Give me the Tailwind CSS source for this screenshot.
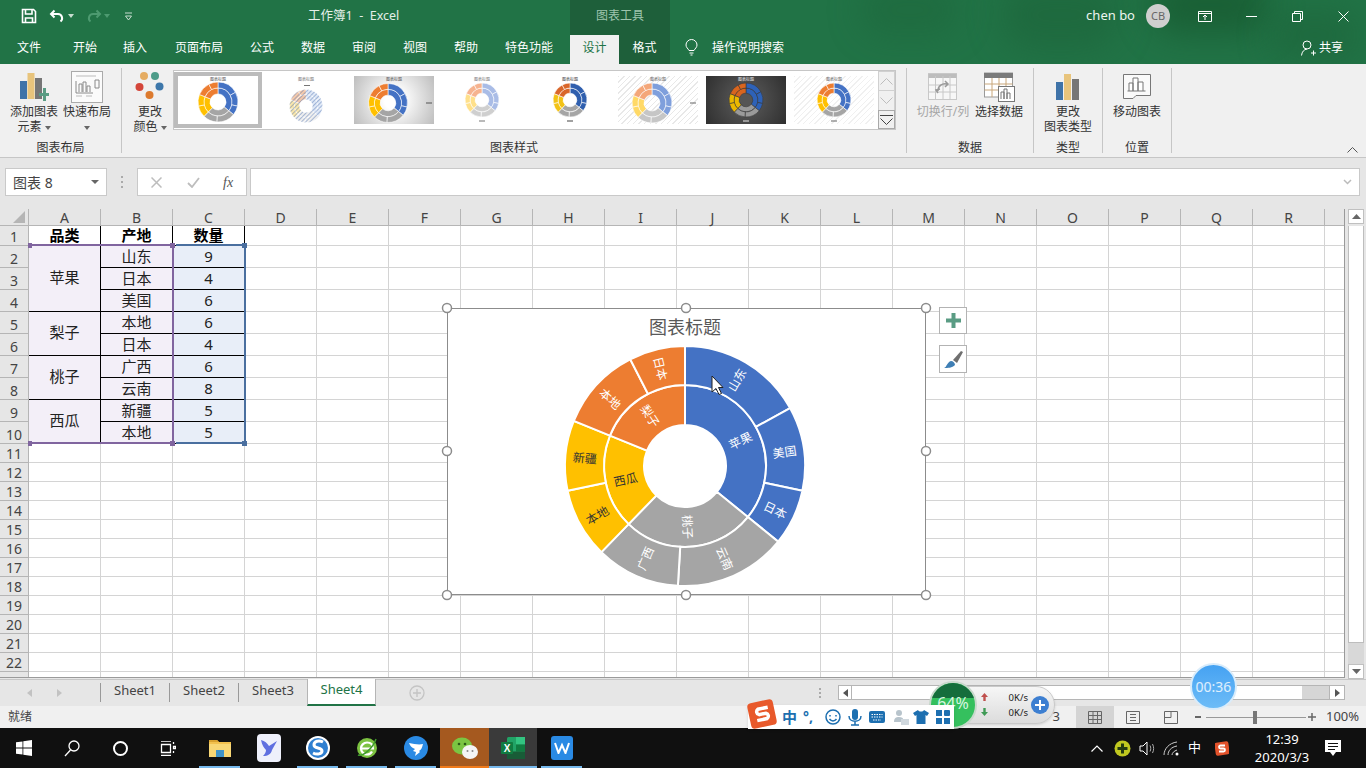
<!DOCTYPE html>
<html lang="zh-CN">
<head>
  <meta charset="UTF-8">
  <title>工作簿1 - Excel</title>
  <meta name="viewport" content="width=device-width, initial-scale=1.0">
  <script src="https://cdn.jsdelivr.net/npm/@tailwindcss/browser@4"></script>
</head>
<body class="relative w-[1366px] h-[768px] overflow-hidden bg-[#e6e6e6] text-[12px] text-[#333333] font-['Noto_Sans','Noto_Sans_CJK_SC',sans-serif]">

  <!-- title bar + tabs -->
  <div class="relative h-[64px] bg-[#217346] overflow-hidden">
    <!-- watercolor pattern -->
    <div class="absolute left-[860px] top-[-15px] w-[100px] h-[50px] rounded-full bg-[#1b6238]/40 blur-lg"></div>
    <div class="absolute left-[1000px] top-[-20px] w-[120px] h-[70px] rounded-full bg-[#1b6238]/50 blur-lg"></div>
    <div class="absolute left-[1150px] top-[-25px] w-[120px] h-[60px] rounded-full bg-[#17592f]/70 blur-lg"></div>
    <div class="absolute left-[1270px] top-[10px] w-[90px] h-[50px] rounded-full bg-[#1b6238]/50 blur-lg"></div>
    <div class="absolute left-[570px] top-0 w-[100px] h-[64px] bg-[#1e5f3a]"></div>

    <div class="relative flex h-[35px] pb-[3px] items-center text-white">
      <div class="flex items-center w-[308px] pl-[21px]">
        <svg width="16" height="16" viewBox="0 0 16 16" fill="none" stroke="#fff" stroke-width="1.6"><path d="M1.5 1.5h11l2 2v11h-13z"/><path d="M4.5 2v4H11V2M4.5 14.5V10h7v4.5"/></svg>
        <svg class="ml-[12px]" width="16" height="14" viewBox="0 0 16 14" fill="none" stroke="#fff" stroke-width="2"><path d="M5.5 1.5 2 5l3.5 3.5"/><path d="M2 5h7a4.2 4.2 0 0 1 2.5 7.5"/></svg>
        <svg class="ml-[3px]" width="6" height="4" viewBox="0 0 6 4" fill="#c8ddd0"><path d="M0 0h6L3 4z"/></svg>
        <svg class="ml-[12px]" width="16" height="14" viewBox="0 0 16 14" fill="none" stroke="#4d9a70" stroke-width="2"><path d="M10.5 1.5 14 5l-3.5 3.5"/><path d="M14 5H7a4.2 4.2 0 0 0-2.5 7.5"/></svg>
        <svg class="ml-[2px]" width="6" height="4" viewBox="0 0 6 4" fill="#4d9a70"><path d="M0 0h6L3 4z"/></svg>
        <svg class="ml-[14px]" width="9" height="9" viewBox="0 0 9 9" fill="none" stroke="#c8ddd0"><path d="M1 1h7M1.5 4h6L4.500 8z"/></svg>
      </div>
      <span class="text-[12.5px] text-[#e4efe8] whitespace-pre">工作簿1  -  Excel</span>
      <span class="absolute left-[570px] w-[100px] text-center text-[#9fc5ae]">图表工具</span>
      <div class="ml-auto flex items-center">
        <span class="text-[13px] text-[#eef5f0]">chen bo</span>
        <span class="ml-[11px] w-[24px] h-[24px] rounded-full bg-[#cfcfcf] text-[#666666] text-[11px] flex items-center justify-center">CB</span>
        <div class="ml-[12px] w-[46px] flex justify-center"><svg width="14" height="11" viewBox="0 0 14 11" fill="none" stroke="#fff"><path d="M.5.5h13v10H.5zM.5 2.5h13M7 9V4.500M5 6l2-2 2 2"/></svg></div>
        <div class="w-[46px] flex justify-center"><svg width="11" height="1" viewBox="0 0 11 1"><path d="M0 .5h11" stroke="#fff"/></svg></div>
        <div class="w-[46px] flex justify-center"><svg width="11" height="11" viewBox="0 0 11 11" fill="none" stroke="#fff"><path d="M.5 2.5h8v8h-8zM2.500 2.500V.5h8v8h-2"/></svg></div>
        <div class="w-[46px] flex justify-center"><svg width="11" height="11" viewBox="0 0 11 11" fill="none" stroke="#fff"><path d="M.5.5l10 10M10.500.5l-10 10"/></svg></div>
      </div>
    </div>

    <div class="relative flex h-[29px] text-white">
      <div class="w-[59px] pl-[17px] leading-[26px]">文件</div>
      <div class="w-[50px] pl-[14px] leading-[26px]">开始</div>
      <div class="w-[52px] pl-[14px] leading-[26px]">插入</div>
      <div class="w-[76px] pl-[14px] leading-[26px]">页面布局</div>
      <div class="w-[51px] pl-[13px] leading-[26px]">公式</div>
      <div class="w-[51px] pl-[13px] leading-[26px]">数据</div>
      <div class="w-[51px] pl-[13px] leading-[26px]">审阅</div>
      <div class="w-[51px] pl-[13px] leading-[26px]">视图</div>
      <div class="w-[51px] pl-[13px] leading-[26px]">帮助</div>
      <div class="w-[78px] pl-[13px] leading-[26px] whitespace-nowrap">特色功能</div>
      <div class="w-[49px] bg-[#f0f0f0] text-[#217346] text-center leading-[26px]">设计</div>
      <div class="w-[51px] text-center leading-[26px]">格式</div>
      <div class="ml-[15px] mt-[4px]"><svg width="13" height="17" viewBox="0 0 13 17" fill="none" stroke="#fff"><path d="M4 11.500C3 9.500 1 8.500 1 6a5.500 5.500 0 0 1 11 0c0 2.500-2 3.500-3 5.500zM4.500 14h4M5.500 16h2"/></svg></div>
      <div class="ml-[14px] leading-[26px]">操作说明搜索</div>
      <div class="ml-auto mr-[23px] flex items-center h-[26px]">
        <svg width="15" height="16" viewBox="0 0 15 16" fill="none" stroke="#fff"><circle cx="6" cy="5" r="4"/><path d="M.5 15.500c.5-4 2.500-6 5.500-6.500M10 13h5M12.500 10.500v5"/></svg>
        <span class="ml-[3px]">共享</span>
      </div>
    </div>
  </div>

  <!-- ribbon -->
  <div class="flex h-[94px] bg-[#f0f0f0] border-b border-[#c6c6c6] text-[#333333]">
    <div class="w-[121px] flex flex-col pt-[6px]">
      <div class="flex pl-[8px] gap-[3px] flex-1">
        <div class="w-[52px] flex flex-col items-center">
          <div class="h-[34px] flex items-center">
            <svg width="30" height="30" viewBox="0 0 30 30"><rect x="1" y="9" width="7" height="18" fill="#3f73a8"/><rect x="8.5" y="1" width="7" height="26" fill="#e8c47c"/><rect x="16" y="6" width="7" height="21" fill="#767676"/><path d="M20 21h4v-5h3v5h4v3h-4v5h-3v-5h-4z" fill="#5a9c84"/></svg>
          </div>
          <div class="leading-[15px] text-center whitespace-nowrap">添加图表<br>元素 <svg class="inline" width="6" height="4" viewBox="0 0 6 4" fill="#666"><path d="M0 0h6L3 4z"/></svg></div>
        </div>
        <div class="w-[48px] flex flex-col items-center">
          <div class="h-[34px] flex items-center">
            <svg width="33" height="33" viewBox="0 0 33 33" fill="none" stroke="#8a8a8a"><rect x=".5" y=".5" width="31" height="31" fill="#fbfbfb" stroke="#aaa"/><path d="M5 5h20M5 25h6M15 25h6" stroke="#bbb"/><path d="M5 10v12h17M8 21v-8h3v8M12 21V11h3v10M16 21v-6h3v6M24 9h4v8h-4z"/></svg>
          </div>
          <div class="leading-[15px] text-center whitespace-nowrap">快速布局<br><svg class="inline" width="6" height="4" viewBox="0 0 6 4" fill="#666"><path d="M0 0h6L3 4z"/></svg></div>
        </div>
      </div>
      <div class="text-center leading-[15px] mb-[2px]">图表布局</div>
    </div>
    <div class="w-px my-[4px] bg-[#c6c6c6]"></div>

    <div class="w-[784px] flex flex-col pt-[6px]">
      <div class="flex flex-1">
        <div class="ml-[5px] w-[46px] flex flex-col items-center">
          <div class="h-[34px] flex items-center">
            <svg width="30" height="30" viewBox="0 0 30 30"><circle cx="9" cy="4" r="4" fill="#e5ac62"/><circle cx="20" cy="4" r="4" fill="#4e9c89"/><circle cx="4.5" cy="15" r="4" fill="#d4463a"/><circle cx="24.5" cy="14.5" r="4" fill="#3d77aa"/><circle cx="14.5" cy="23" r="4" fill="#dc7a2e"/></svg>
          </div>
          <div class="leading-[15px] text-center whitespace-nowrap">更改<br>颜色 <svg class="inline" width="6" height="4" viewBox="0 0 6 4" fill="#666"><path d="M0 0h6L3 4z"/></svg></div>
        </div>
        <div class="h-[60px] w-[723px] flex bg-white border border-[#c6c6c6]">
          <div id="gallery" class="flex w-[704px]"></div>
          <div class="w-[17px] flex flex-col bg-[#f0f0f0]">
            <div class="h-[20px] flex items-center justify-center border border-[#d0d0d0]"><svg width="13" height="7" viewBox="0 0 13 7" fill="none" stroke="#bdbdbd"><path d="M.5 6.500 6.500.5l6 6"/></svg></div>
            <div class="h-[19px] flex items-center justify-center border-x border-[#d0d0d0]"><svg width="13" height="7" viewBox="0 0 13 7" fill="none" stroke="#bdbdbd"><path d="M.5.5l6 6 6-6"/></svg></div>
            <div class="h-[19px] flex flex-col items-center justify-center gap-[2px] border border-[#a9a9a9]"><div class="w-[13px] h-px bg-[#444444]"></div><svg width="13" height="7" viewBox="0 0 13 7" fill="none" stroke="#444"><path d="M.5.5l6 6 6-6"/></svg></div>
          </div>
        </div>
      </div>
      <div class="text-center leading-[15px] mb-[2px]">图表样式</div>
    </div>
    <div class="w-px my-[4px] bg-[#c6c6c6]"></div>

    <div class="w-[126px] flex flex-col pt-[6px]">
      <div class="flex pl-[9px] flex-1">
        <div class="w-[54px] flex flex-col items-center text-[#a6a6a6]">
          <div class="h-[34px] flex items-center">
            <svg width="30" height="28" viewBox="0 0 30 28" fill="none" stroke="#c8c8c8"><rect x=".5" y=".5" width="28" height="26" fill="#f7f7f7"/><path d="M.5 3h28" stroke="#bdbdbd" stroke-width="4"/><path d="M.5 12h28M.5 19h28M7.500 3v24M15 3v24M22 3v24"/><path d="M10 18a7 7 0 0 1 9-7M17 8l3 3-3 3M10 20l-2-3 4-1" stroke="#9a9a9a" stroke-width="1.5"/></svg>
          </div>
          <div class="leading-[15px] whitespace-nowrap">切换行/列</div>
        </div>
        <div class="w-[58px] flex flex-col items-center">
          <div class="h-[34px] flex items-center">
            <svg width="31" height="30" viewBox="0 0 31 30" fill="none" stroke="#c9a77a"><rect x=".5" y="1" width="28" height="24" fill="#fff" stroke="#999"/><rect x="0" y="1" width="29" height="5" fill="#7b7b7b" stroke="none"/><path d="M.5 12h28M.5 18h28M8 6v19M15 6v19M22 6v19"/><rect x="14.5" y="14.5" width="16" height="15" fill="#fff" stroke="#777"/><path d="M17 27v-7h3v7M20 27V17h3v10M23 27v-6h3v6" stroke="#777"/></svg>
          </div>
          <div class="leading-[15px] whitespace-nowrap">选择数据</div>
        </div>
      </div>
      <div class="text-center leading-[15px] mb-[2px]">数据</div>
    </div>
    <div class="w-px my-[4px] bg-[#c6c6c6]"></div>

    <div class="w-[68px] flex flex-col pt-[6px]">
      <div class="flex flex-col items-center flex-1">
        <div class="h-[34px] flex items-center">
          <svg width="24" height="28" viewBox="0 0 24 28"><rect x="0" y="9" width="7" height="18" fill="#3f73a8"/><rect x="8" y="1" width="7" height="26" fill="#e8c47c"/><rect x="16" y="6" width="7" height="21" fill="#767676"/></svg>
        </div>
        <div class="leading-[15px] text-center whitespace-nowrap">更改<br>图表类型</div>
      </div>
      <div class="text-center leading-[15px] mb-[2px]">类型</div>
    </div>
    <div class="w-px my-[4px] bg-[#c6c6c6]"></div>

    <div class="w-[68px] flex flex-col pt-[6px]">
      <div class="flex flex-col items-center flex-1">
        <div class="h-[34px] flex items-center">
          <svg width="29" height="26" viewBox="0 0 29 26" fill="#fff" stroke="#777"><path d="M.5.5h27v21H13l-3 3H.5z" fill="#fafafa"/><path d="M6 17V9h4v8M10 17V4h5v13M15 17V8h5v9M4.500 17h18" fill="#fff"/></svg>
        </div>
        <div class="leading-[15px] whitespace-nowrap">移动图表</div>
      </div>
      <div class="text-center leading-[15px] mb-[2px]">位置</div>
    </div>
    <div class="w-px my-[4px] bg-[#c6c6c6]"></div>

    <div class="flex-1 flex justify-end items-end pr-[8px] pb-[4px]">
      <svg width="11" height="6" viewBox="0 0 11 6" fill="none" stroke="#555"><path d="M.5 5.500l5-5 5 5"/></svg>
    </div>
  </div>

  <!-- name box + formula bar -->
  <div class="flex h-[51px] pt-[10px] pl-[5px] bg-[#e6e6e6]">
    <div class="w-[102px] h-[28px] flex items-center justify-between px-[7px] bg-white border border-[#c9c9c9] text-[14px] text-[#444444]">
      <span>图表 8</span><svg width="8" height="4" viewBox="0 0 8 4" fill="#666"><path d="M0 0h8L4 4z"/></svg>
    </div>
    <div class="w-[30px] flex flex-col items-center justify-center gap-[3px] h-[28px]">
      <div class="w-[2px] h-[2px] bg-[#aaaaaa]"></div><div class="w-[2px] h-[2px] bg-[#aaaaaa]"></div><div class="w-[2px] h-[2px] bg-[#aaaaaa]"></div>
    </div>
    <div class="w-[110px] h-[28px] flex items-center bg-white border border-[#c9c9c9]">
      <svg class="ml-[13px]" width="11" height="11" viewBox="0 0 11 11" fill="none" stroke="#bdbdbd" stroke-width="1.5"><path d="M.5.5l10 10M10.500.5l-10 10"/></svg>
      <svg class="ml-[25px]" width="13" height="11" viewBox="0 0 13 11" fill="none" stroke="#bdbdbd" stroke-width="1.8"><path d="M1 6l4 4 7-9"/></svg>
      <span class="ml-[23px] text-[14px] italic text-[#555555] font-['Liberation_Serif',serif]">fx</span>
    </div>
    <div class="ml-[3px] w-[1110px] h-[28px] flex items-center justify-end pr-[7px] bg-white border border-[#c9c9c9]">
      <svg width="9" height="6" viewBox="0 0 9 6" fill="none" stroke="#bbb" stroke-width="1.5"><path d="M1 1l3.500 3.500L8 1"/></svg>
    </div>
  </div>

  <!-- sheet -->
  <div class="relative flex h-[470px] bg-[#e6e6e6]">
    <div class="w-[1345px] h-[469px] overflow-hidden border-r border-b border-[#9a9a9a]">
      <div id="sheet" class="grid grid-cols-[29px_repeat(18,72px)_20px] grid-rows-[17px_20px_repeat(9,22px)_repeat(13,19px)] bg-white"></div>
    </div>
    <div class="ml-[3px] w-[16px] flex flex-col">
      <div class="h-[15px] flex items-center justify-center bg-white border border-[#c0c0c0]"><svg width="9" height="5" viewBox="0 0 9 5" fill="#666"><path d="M0 5h9L4.500 0z"/></svg></div>
      <div class="h-[417px] mt-[2px] bg-white border-x border-b border-[#bdbdbd]"></div>
      <div class="h-[21px] bg-[#d8d8d8]"></div>
      <div class="h-[15px] flex items-center justify-center bg-white border border-[#c0c0c0]"><svg width="9" height="5" viewBox="0 0 9 5" fill="#666"><path d="M0 0h9L4.500 5z"/></svg></div>
    </div>

    <!-- selection ranges over the grid -->
    <div class="absolute left-[30px] top-[35px] w-[144px] h-[200px] border-y-[2px] border-r-[2px] border-[#80659f]"></div>
    <div class="absolute left-[176px] top-[35px] w-[70px] h-[200px] border-y-[2px] border-r-[2px] border-[#4a6f9f]"></div>
    <div class="absolute left-[28px] top-[34px] w-[4px] h-[5px] bg-[#80659f]"></div>
    <div class="absolute left-[170px] top-[34px] w-[5px] h-[5px] bg-[#80659f]"></div>
    <div class="absolute left-[242px] top-[34px] w-[5px] h-[5px] bg-[#4a6f9f]"></div>
    <div class="absolute left-[28px] top-[232px] w-[4px] h-[5px] bg-[#80659f]"></div>
    <div class="absolute left-[170px] top-[232px] w-[5px] h-[5px] bg-[#80659f]"></div>
    <div class="absolute left-[242px] top-[232px] w-[5px] h-[5px] bg-[#4a6f9f]"></div>

    <!-- chart object -->
    <div class="absolute left-[447px] top-[99px] w-[479px] h-[287px] bg-white border border-[#8c8c8c]">
      <svg id="chart" width="477" height="285" viewBox="448 309 477 285" class="block"></svg>
    </div>
    <svg class="absolute left-[441px] top-[93px]" width="491" height="299" viewBox="0 0 491 299" fill="#fff" stroke="#8c8c8c" stroke-width="1.5">
      <circle cx="6" cy="6" r="4.5"/><circle cx="245" cy="6" r="4.5"/><circle cx="485" cy="6" r="4.5"/>
      <circle cx="6" cy="149" r="4.5"/><circle cx="485" cy="149" r="4.5"/>
      <circle cx="6" cy="293" r="4.5"/><circle cx="245" cy="293" r="4.5"/><circle cx="485" cy="293" r="4.5"/>
    </svg>
    <div class="absolute left-[939px] top-[98px] w-[28px] h-[27px] flex items-center justify-center bg-white border border-[#b3b3b3]">
      <svg width="15" height="15" viewBox="0 0 15 15" fill="#5a9c84"><path d="M5.500 0h4v5.500H15v4H9.500V15h-4V9.500H0v-4h5.500z"/></svg>
    </div>
    <div class="absolute left-[939px] top-[136px] w-[28px] h-[28px] flex items-center justify-center bg-white border border-[#b3b3b3]">
      <svg width="20" height="19" viewBox="0 0 20 19"><path d="M10 10 18 1l2 1-6 11z" fill="#6f6f6f"/><path d="M1 18c3-1 3-6 7-7 2 0 4 2 4 4-3 3-7 3-11 3z" fill="#3f7fb5"/></svg>
    </div>
    <!-- mouse pointer -->
    <svg class="absolute left-[711px] top-[166px]" width="13" height="21" viewBox="0 0 13 21"><path d="M1 1v16l4-3.500 3 6 2.500-1-3-6H12z" fill="#fff" stroke="#222"/></svg>
  </div>

  <!-- sheet tabs -->
  <div class="flex h-[27px] bg-[#e6e6e6] border-t border-[#c6c6c6] text-[#444444]">
    <div class="w-[100px] flex items-center pl-[27px] gap-[25px]">
      <svg width="5" height="8" viewBox="0 0 5 8" fill="#c2c2c2"><path d="M5 0v8L0 4z"/></svg>
      <svg width="5" height="8" viewBox="0 0 5 8" fill="#c2c2c2"><path d="M0 0v8l5-4z"/></svg>
    </div>
    <div class="w-[69px] mt-[3px] mb-[4px] border-l border-[#999999] text-center text-[13px] leading-[15px]">Sheet1</div>
    <div class="w-[69px] mt-[3px] mb-[4px] border-l border-[#999999] text-center text-[13px] leading-[15px]">Sheet2</div>
    <div class="w-[69px] mt-[3px] mb-[4px] border-l border-[#999999] text-center text-[13px] leading-[15px]">Sheet3</div>
    <div class="w-[69px] h-[27px] -mt-px bg-white border-x border-[#b5b5b5] border-b-2 border-b-[#217346] text-center text-[13px] leading-[20px] text-[#217346]">Sheet4</div>
    <div class="ml-[33px] flex items-center"><svg width="16" height="16" viewBox="0 0 16 16" fill="none" stroke="#c4c4c4" stroke-width="1.3"><circle cx="8" cy="8" r="7"/><path d="M8 4v8M4 8h8"/></svg></div>
    <div class="ml-[394px] flex flex-col justify-center gap-[2px]"><div class="w-[2px] h-[2px] bg-[#aaaaaa]"></div><div class="w-[2px] h-[2px] bg-[#aaaaaa]"></div><div class="w-[2px] h-[2px] bg-[#aaaaaa]"></div></div>
    <div class="ml-[17px] mt-[5px] h-[15px] w-[507px] flex bg-[#d6d6d6] border border-[#b5b5b5]">
      <div class="w-[13px] bg-white flex items-center justify-center border-r border-[#b5b5b5]"><svg width="5" height="8" viewBox="0 0 5 8" fill="#555"><path d="M5 0v8L0 4z"/></svg></div>
      <div class="w-[450px] bg-white"></div>
      <div class="flex-1"></div>
      <div class="w-[15px] bg-white flex items-center justify-center border-l border-[#b5b5b5]"><svg width="5" height="8" viewBox="0 0 5 8" fill="#555"><path d="M0 0v8l5-4z"/></svg></div>
    </div>
  </div>

  <!-- status bar -->
  <div class="flex items-center h-[22px] bg-[#f0f0f0] pl-[8px] text-[#444444]">
    <span>就绪</span>
    <div class="ml-auto flex items-center h-full">
      <span class="mr-[16px] text-[13px]">3</span>
      <div class="w-[38px] h-full bg-[#d4d4d4] flex items-center justify-center"><svg width="14" height="13" viewBox="0 0 14 13" fill="none" stroke="#666"><path d="M.5.5h13v12H.5zM.5 4.500h13M.5 8.500h13M5 .5v12M9.500.5v12"/></svg></div>
      <div class="w-[38px] flex justify-center"><svg width="14" height="13" viewBox="0 0 14 13" fill="none" stroke="#666"><path d="M.5.5h13v12H.5zM4 3.500h6M4 6.500h6M4 9.500h6"/></svg></div>
      <div class="w-[38px] flex justify-center"><svg width="14" height="13" viewBox="0 0 14 13" fill="none" stroke="#666"><path d="M.5.5h13v12H.5zM.5 6.500H7V.5"/></svg></div>
      <div class="w-[14px] ml-[1px] flex justify-center"><div class="w-[6px] h-[2px] bg-[#666666]"></div></div>
      <div class="relative w-[100px] h-px bg-[#999999] ml-[1px]"><div class="absolute left-[47px] top-[-6px] w-[4px] h-[13px] bg-[#777777]"></div></div>
      <svg class="ml-[2px] mr-[10px]" width="8" height="8" viewBox="0 0 8 8" fill="none" stroke="#666" stroke-width="1.5"><path d="M4 0v8M0 4h8"/></svg>
      <span class="w-[40px] text-[13px] text-[#444444]">100%</span>
    </div>
  </div>

  <!-- taskbar -->
  <div class="relative flex items-center h-[40px] bg-[#101010] text-white">
    <div class="w-[48px] flex justify-center"><svg width="16" height="16" viewBox="0 0 16 16" fill="#fff"><path d="M0 2.300 6.500 1.400v6.200H0zM7.300 1.300 16 0v7.600H7.300zM0 8.400h6.500v6.200L0 13.700zM7.300 8.400H16V16l-8.700-1.300z"/></svg></div>
    <div class="w-[48px] flex justify-center"><svg width="16" height="17" viewBox="0 0 16 17" fill="none" stroke="#fff" stroke-width="1.3"><circle cx="10" cy="6" r="5"/><path d="M6.500 10 1 16"/></svg></div>
    <div class="w-[48px] flex justify-center"><div class="w-[15px] h-[15px] rounded-full border-[2.5px] border-white"></div></div>
    <div class="w-[48px] flex justify-center"><svg width="16" height="15" viewBox="0 0 16 15" fill="none" stroke="#fff" stroke-width="1.3"><path d="M1 0h10M1 14.500h10M1.500 3.500h9v8h-9zM13.500 1v2M13.500 5.500h2v2h-2zM13.500 10v2"/></svg></div>
    <div class="relative w-[49px] ml-[3px] h-full flex items-center justify-center">
      <svg width="22" height="20" viewBox="0 0 22 20"><path d="M0 2h8l2 2h12v15H0z" fill="#f2c14e"/><path d="M0 6h22v13H0z" fill="#f8d775"/><path d="M7 12h8v7H7z" fill="#3f93c9"/><path d="M0 2h8l2 2H0z" fill="#d9a22f"/></svg>
      <div class="absolute bottom-0 left-[4px] right-[4px] h-[2px] bg-[#76b9ed]"></div>
    </div>
    <div class="w-[49px] h-full flex items-center justify-center">
      <div class="w-[24px] h-[28px] rounded-[4px] bg-[#eef0fb] flex items-center justify-center"><svg width="18" height="18" viewBox="0 0 18 18"><path d="M1 1c4 1 6 3 8 6l8-5-5 9c-1 4-4 6-9 6 2-2 3-4 3-6C4 9 2 6 1 1z" fill="#5f6fe0"/></svg></div>
    </div>
    <div class="relative w-[49px] h-full flex items-center justify-center">
      <svg width="24" height="24" viewBox="0 0 24 24"><circle cx="12" cy="12" r="12" fill="#fff"/><circle cx="12" cy="12" r="10" fill="#2f7fd0"/><path d="M17 6c-4-2-9-1-9 3 0 4 8 2 8 6 0 3-5 4-9 2" fill="none" stroke="#fff" stroke-width="3"/></svg>
      <div class="absolute bottom-0 left-[4px] right-[4px] h-[2px] bg-[#76b9ed]"></div>
    </div>
    <div class="relative w-[49px] h-full flex items-center justify-center">
      <svg width="24" height="24" viewBox="0 0 24 24"><circle cx="12" cy="12" r="10" fill="#7cc241"/><path d="M6 12.500h12c0-4-2.500-6-6-6s-6 3-6 6 2.500 6 6 6c2.500 0 4-1 5-3" fill="none" stroke="#fff" stroke-width="2.2"/><path d="M3 19C8 21 18 12 21 3" fill="none" stroke="#3e9a2c" stroke-width="1.5"/></svg>
      <div class="absolute bottom-0 left-[4px] right-[4px] h-[2px] bg-[#76b9ed]"></div>
    </div>
    <div class="relative w-[49px] h-full flex items-center justify-center">
      <svg width="24" height="24" viewBox="0 0 24 24"><circle cx="12" cy="12" r="12" fill="#2a8ae4"/><path d="M5 7c5 1 10 2 14 1-1 4-2 6-4 7l1 1-5 4 1-4-3-1 2-2C8 12 6 10 5 7z" fill="#fff"/></svg>
      <div class="absolute bottom-0 left-[4px] right-[4px] h-[2px] bg-[#76b9ed]"></div>
    </div>
    <div class="relative w-[49px] h-full bg-[#a5591f] flex items-center justify-center">
      <svg width="26" height="23" viewBox="0 0 26 23"><ellipse cx="10" cy="9" rx="10" ry="8.5" fill="#7bc542"/><ellipse cx="18" cy="15" rx="8" ry="7" fill="#f4f4f4"/><circle cx="7" cy="7" r="1.3" fill="#2b5c16"/><circle cx="13" cy="7" r="1.3" fill="#2b5c16"/><circle cx="15.5" cy="14" r="1" fill="#888"/><circle cx="20.5" cy="14" r="1" fill="#888"/></svg>
      <div class="absolute bottom-0 left-0 right-0 h-[2px] bg-[#f07a1a]"></div>
    </div>
    <div class="relative w-[48px] h-full bg-[#3a3a3a] flex items-center justify-center">
      <svg width="24" height="22" viewBox="0 0 24 22"><rect x="6" y="0" width="18" height="22" rx="1.5" fill="#21a366"/><rect x="15" y="0" width="9" height="7.5" fill="#33c481"/><rect x="15" y="7.5" width="9" height="7" fill="#107c41"/><rect x="6" y="14.5" width="18" height="7.5" fill="#185c37"/><rect x="0" y="5" width="12" height="12" rx="1" fill="#107c41"/><text x="6" y="14.5" text-anchor="middle" font-size="10" font-weight="700" fill="#fff" font-family="Liberation Sans">X</text></svg>
      <div class="absolute bottom-0 left-0 right-0 h-[2px] bg-[#76b9ed]"></div>
    </div>
    <div class="relative w-[49px] h-full flex items-center justify-center">
      <div class="w-[22px] h-[24px] rounded-[3px] bg-[#2a8ae4] flex items-center justify-center"><svg width="16" height="12" viewBox="0 0 16 12" fill="none" stroke="#fff" stroke-width="2"><path d="M1 1l3.500 10L8 3l3.500 8L15 1"/></svg></div>
      <div class="absolute bottom-0 left-[4px] right-[4px] h-[2px] bg-[#76b9ed]"></div>
    </div>

    <div class="ml-auto flex items-center h-full">
      <svg width="12" height="7" viewBox="0 0 12 7" fill="none" stroke="#fff" stroke-width="1.2"><path d="M.5 6.500 6 1l5.500 5.500"/></svg>
      <svg class="ml-[11px]" width="17" height="17" viewBox="0 0 17 17"><circle cx="8.5" cy="8.5" r="8" fill="#c0c820"/><path d="M7 3.500h3V7h3.500v3H10v3.500H7V10H3.500V7H7z" fill="#243a10"/></svg>
      <svg class="ml-[8px]" width="17" height="15" viewBox="0 0 17 15" fill="none" stroke="#fff"><path d="M1 5h3l4-4v13l-4-4H1z"/><path d="M11 4.500c1 2 1 4 0 6M13.500 3c1.500 3 1.500 6 0 9" stroke="#aaa"/></svg>
      <svg class="ml-[7px]" width="16" height="15" viewBox="0 0 16 15" fill="none" stroke="#ccc"><path d="M1 14C1 8 6 2 14 1M5 14c0-4 3-8 9-9M9 14c0-2 2-4 5-5"/><circle cx="14" cy="13" r="1.5" fill="#fff" stroke="none"/></svg>
      <span class="ml-[9px] text-[13px]">中</span>
      <svg class="ml-[14px]" width="14" height="15" viewBox="0 0 14 15"><rect x="0" y="1" width="14" height="13" rx="2" fill="#e2522b" transform="rotate(-8 7 7)"/><path d="M10 4.500H5.500a1.500 1.500 0 0 0 0 3H8.500a1.500 1.500 0 0 1 0 3H4" fill="none" stroke="#fff" stroke-width="1.8"/></svg>
      <div class="ml-[13px] w-[80px] text-center text-[13px] leading-[18px]">12:39<br>2020/3/3</div>
      <div class="w-[22px] mr-[22px] flex justify-center"><svg width="16" height="16" viewBox="0 0 16 16"><path d="M0 0h16v12h-5l-3 4-3-4H0z" fill="#fff"/><path d="M3 3.500h10M3 6.500h10M3 9.500h7" stroke="#101010"/></svg></div>
    </div>
  </div>

  <!-- floating widgets -->
  <div class="absolute left-[950px] top-[686px] w-[105px] h-[38px] rounded-r-[19px] bg-linear-to-b from-[#f6f6f6] to-[#dcdcdc] border border-[#c9c9c9] shadow text-[#222222]">
    <div class="absolute left-[30px] top-[6px]"><svg width="7" height="8" viewBox="0 0 7 8" fill="#c0504d"><path d="M3.500 0 7 4H4.700v4H2.300V4H0z"/></svg></div>
    <div class="absolute left-[30px] top-[21px]"><svg width="7" height="8" viewBox="0 0 7 8" fill="#3f9a55"><path d="M3.500 8 7 4H4.700V0H2.300v4H0z"/></svg></div>
    <div class="absolute left-[57px] top-[3px] leading-[15px] text-[9.5px] w-[20px] text-right">0K/s<br>0K/s</div>
    <div class="absolute left-[80px] top-[9px] w-[18px] h-[18px] rounded-full bg-[#3d7fd1] flex items-center justify-center"><svg width="10" height="10" viewBox="0 0 10 10" fill="none" stroke="#fff" stroke-width="2"><path d="M5 0v10M0 5h10"/></svg></div>
  </div>
  <div class="absolute left-[929px] top-[681px] w-[48px] h-[48px] rounded-full overflow-hidden border-2 border-[#c8d8cc] bg-[#35c05e] flex items-center justify-center">
    <div class="absolute left-0 top-0 w-full h-[15px] bg-[#156d3c]"></div>
    <span class="relative -mt-[5px] text-[#d9f5e0] text-[16px]">64%</span>
  </div>
  <div class="absolute left-[1190px] top-[663px] w-[47px] h-[47px] rounded-full bg-linear-to-b from-[#45a2f2] to-[#6dbcf7] border-2 border-[#d9ecfb] flex items-center justify-center text-[14px] text-white/80">00:36</div>

  <!-- sogou toolbar -->
  <div class="absolute left-[748px] top-[705px] w-[206px] h-[24px] flex items-center bg-white shadow-sm">
    <div class="absolute left-[1px] top-[-4px] w-[26px] h-[26px] rotate-[-12deg] rounded-[4px] bg-[#e8592b] flex items-center justify-center">
      <svg width="17" height="16" viewBox="0 0 17 16" fill="none" stroke="#fff" stroke-width="3.5"><path d="M15 2.500H5a3 3 0 0 0 0 5.500h7a3 3 0 0 1 0 5.500H2"/></svg>
    </div>
    <div class="ml-[34px] flex items-center text-[#1d6fb0]">
      <span class="text-[15px] font-bold leading-none w-[16px]">中</span>
      <span class="text-[14px] font-bold leading-none w-[16px] ml-[5px]">°,</span>
      <svg class="ml-[6px]" width="16" height="16" viewBox="0 0 16 16" fill="none" stroke="#1d6fb0" stroke-width="1.5"><circle cx="8" cy="8" r="7"/><path d="M5 6v1.500M11 6v1.500M4.500 10c2 2.500 5 2.500 7 0"/></svg>
      <svg class="ml-[7px]" width="14" height="17" viewBox="0 0 14 17" fill="#1d6fb0"><rect x="4" y="0" width="6" height="11" rx="3"/><path d="M1 7c0 7 12 7 12 0M7 12v4M3 16h8" fill="none" stroke="#1d6fb0" stroke-width="1.5"/></svg>
      <svg class="ml-[7px]" width="16" height="12" viewBox="0 0 16 12"><rect width="16" height="12" rx="2" fill="#1d6fb0"/><path d="M2.500 3.500h11M2.500 6h11M4 9h8" stroke="#fff" stroke-dasharray="1.500 1"/></svg>
      <svg class="ml-[8px]" width="16" height="16" viewBox="0 0 16 16" fill="#b8c4cc"><circle cx="6" cy="4" r="3"/><path d="M1 13c0-4 2-5 5-5s4 1 4 2v3z"/><rect x="8" y="10" width="8" height="6" fill="#d0d8de"/></svg>
      <svg class="ml-[4px]" width="16" height="14" viewBox="0 0 16 14" fill="#1d6fb0"><path d="M5 0 0 3l2 3 1.500-1v9h9V5L14 6l2-3-5-3c-1 2-5 2-6 0z"/></svg>
      <svg class="ml-[7px]" width="14" height="14" viewBox="0 0 14 14" fill="#1d6fb0"><rect width="6" height="6"/><rect x="8" width="6" height="6" rx="1"/><rect y="8" width="6" height="6"/><rect x="8" y="8" width="6" height="6"/></svg>
    </div>
  </div>

  <script>
    // worksheet cells
    const COLS = "ABCDEFGHIJKLMNOPQR".split("");
    const rows = {
      1: ["品类", "产地", "数量"],
      2: ["苹果", "山东", "9"], 3: [null, "日本", "4"], 4: [null, "美国", "6"],
      5: ["梨子", "本地", "6"], 6: [null, "日本", "4"],
      7: ["桃子", "广西", "6"], 8: [null, "云南", "8"],
      9: ["西瓜", "新疆", "5"], 10: [null, "本地", "5"]
    };
    const spans = { 2: "row-span-3", 5: "row-span-2", 7: "row-span-2", 9: "row-span-2" };
    let html = '<div class="bg-[#e6e6e6] border-r border-b border-[#b5b5b5] flex items-center justify-end pr-[3px]"><svg width="12" height="12" viewBox="0 0 12 12" fill="#b5b5b5"><path d="M12 0v12H0z"/></svg></div>';
    COLS.forEach(c => {
      html += `<div class="bg-[#e6e6e6] border-r border-b border-[#b5b5b5] text-center text-[14px] leading-[17px] text-[#444444]">${c}</div>`;
    });
    html += '<div class="bg-[#e6e6e6] border-b border-[#b5b5b5]"></div>';
    for (let r = 1; r <= 23; r++) {
      html += `<div class="bg-[#e6e6e6] border-r border-b border-[#b5b5b5] flex items-end justify-center text-[14px] leading-[16px] text-[#444444]">${r}</div>`;
      for (let c = 0; c < 19; c++) {
        const row = rows[r];
        if (row && c < 3) {
          const val = row[c];
          if (val === null) continue;
          if (r === 1) {
            html += `<div class="border-r border-b border-black flex items-center justify-center text-[15px] font-bold text-black">${val}</div>`;
          } else if (c === 0) {
            html += `<div class="${spans[r]} pb-[3px] border-r border-b border-black bg-[#f3eff8] flex items-center justify-center text-[15px] text-[#222222]">${val}</div>`;
          } else if (c === 1) {
            html += `<div class="border-r border-b border-black bg-[#f3eff8] flex items-center justify-center text-[15px] text-[#222222]">${val}</div>`;
          } else {
            html += `<div class="border-r border-b border-black bg-[#e8eef8] flex items-center justify-center text-[15px] text-[#222222]">${val}</div>`;
          }
        } else {
          html += '<div class="border-r border-b border-[#d4d4d4]"></div>';
        }
      }
    }
    document.getElementById("sheet").innerHTML = html;

    // sunburst drawing
    const point = (cx, cy, r, a) => {
      const t = (a - 90) * Math.PI / 180;
      return [cx + r * Math.cos(t), cy + r * Math.sin(t)];
    };
    function sector(cx, cy, r0, r1, a0, a1, fill, stroke, sw) {
      const [x0, y0] = point(cx, cy, r1, a0), [x1, y1] = point(cx, cy, r1, a1);
      const [x2, y2] = point(cx, cy, r0, a1), [x3, y3] = point(cx, cy, r0, a0);
      const big = a1 - a0 > 180 ? 1 : 0;
      return `<path d="M${x0} ${y0}A${r1} ${r1} 0 ${big} 1 ${x1} ${y1}L${x2} ${y2}A${r0} ${r0} 0 ${big} 0 ${x3} ${y3}Z" fill="${fill}" stroke="${stroke}" stroke-width="${sw}"/>`;
    }
    const inner = [["苹果", 19, 0], ["桃子", 14, 1], ["西瓜", 10, 2], ["梨子", 10, 3]];
    const outer = [["山东", 9, 0], ["美国", 6, 0], ["日本", 4, 0], ["云南", 8, 1], ["广西", 6, 1], ["本地", 5, 2], ["新疆", 5, 2], ["本地", 6, 3], ["日本", 4, 3]];
    const TOTAL = 53;
    function sunburst(cx, cy, r0, r1, r2, colors, stroke, sw, labels, fs) {
      let out = "";
      [[inner, r0, r1], [outer, r1, r2]].forEach(([list, a, b]) => {
        let sum = 0;
        list.forEach(([name, v, ci]) => {
          const a0 = sum / TOTAL * 360, a1 = (sum + v) / TOTAL * 360;
          out += sector(cx, cy, a, b, a0, a1, colors[ci], stroke, sw);
          if (labels) {
            const mid = (a0 + a1) / 2;
            const [x, y] = point(cx, cy, (a + b) / 2, mid);
            const rot = mid < 180 ? mid - 90 : mid + 90;
            const dark = ci === 2;
            out += `<text x="${x}" y="${y}" transform="rotate(${rot} ${x} ${y})" text-anchor="middle" dominant-baseline="central" font-size="${fs}" fill="${dark ? "#333333" : "#ffffff"}" font-family="Noto Sans CJK SC">${name}</text>`;
          }
          sum += v;
        });
      });
      return out;
    }
    const BASE = ["#4472c4", "#a5a5a5", "#ffc000", "#ed7d31"];
    document.getElementById("chart").innerHTML =
      `<text x="685" y="326" text-anchor="middle" dominant-baseline="central" font-size="18" fill="#595959" font-family="Noto Sans CJK SC">图表标题</text>` +
      sunburst(685, 466, 41, 81, 120, BASE, "#ffffff", 2, true, 12);

    // chart style gallery
    const PASTEL = ["#a9bce6", "#cfcfcf", "#ffe08a", "#f6b38f"];
    const DEEP = ["#2f5fae", "#a5a5a5", "#f2c215", "#d9662a"];
    const HATCH = "repeating-linear-gradient(135deg,#e8e8e8 0 1px,#ffffff 1px 4px)";
    const FAINT = "repeating-linear-gradient(135deg,#f0f0f0 0 1px,#ffffff 1px 4px)";
    const thumbs = [
      { bg: "#ffffff", colors: BASE, title: "#555555", cx: 40, cy: 26, r: 20 },
      { bg: "#ffffff", colors: ["#dfe8f6", "#eeeeee", "#f9e6ac", "#f4c9ab"], title: "#777777", cx: 40, cy: 30, r: 16.5, hatch: true, legend: "top" },
      { bg: "radial-gradient(circle,#ffffff 20%,#bdbdbd 100%)", colors: BASE, title: "#555555", cx: 34, cy: 27, r: 19.5, legend: "right" },
      { bg: "#ffffff", colors: PASTEL, title: "#777777", cx: 40, cy: 24, r: 17, legend: "bottom" },
      { bg: "#ffffff", colors: DEEP, title: "#444444", cx: 40, cy: 24, r: 17, legend: "bottom" },
      { bg: HATCH, colors: ["#7f9fdc", "#c6c6c6", "#ffd966", "#f4a77a"], title: "#666666", cx: 34, cy: 27, r: 20, legend: "right" },
      { bg: "radial-gradient(circle,#555555 20%,#2f2f2f 100%)", colors: ["#2e62b8", "#9a9a9a", "#ecb800", "#d8651f"], title: "#e8e8e8", cx: 40, cy: 24, r: 17, stroke: "#3a3a3a", legend: "bottom" },
      { bg: FAINT, colors: BASE, title: "#666666", cx: 40, cy: 24, r: 17, legend: "bottom" }
    ];
    document.getElementById("gallery").innerHTML = thumbs.map((t, i) => {
      const box = i === 0 ? "bg-[#bcbcbc]" : "bg-transparent";
      const spot = { top: [38, 9], right: [72, 26.5], bottom: [37, 44.5] }[t.legend];
      const legend = spot ? `<rect x="${spot[0]}" y="${spot[1]}" width="6" height="1" fill="${t.title}"/>` : "";
      const hatch = t.hatch
        ? `<defs><pattern id="thumb-hatch" width="3" height="3" patternUnits="userSpaceOnUse" patternTransform="rotate(45)"><path d="M0 0v3" stroke="#3a62a8" stroke-width="0.8"/></pattern></defs><path fill-rule="evenodd" fill="url(#thumb-hatch)" d="M${t.cx - t.r} ${t.cy}a${t.r} ${t.r} 0 1 0 ${2 * t.r} 0a${t.r} ${t.r} 0 1 0 ${-2 * t.r} 0ZM${t.cx - t.r * 0.4} ${t.cy}a${t.r * 0.4} ${t.r * 0.4} 0 1 0 ${0.8 * t.r} 0a${t.r * 0.4} ${t.r * 0.4} 0 1 0 ${-0.8 * t.r} 0Z"/>`
        : "";
      return `<div class="w-[88px] h-[56px] mt-px p-[4px] ${box} flex-none">
        <div class="w-[80px] h-[48px]" style="background:${t.bg}">
          <svg width="80" height="48" viewBox="0 0 80 48" class="block">
            <text x="40" y="5" text-anchor="middle" font-size="4" fill="${t.title}" font-family="Noto Sans CJK SC">图表标题</text>
            ${sunburst(t.cx, t.cy, t.r * 0.4, t.r * 0.7, t.r, t.colors, t.stroke || "#ffffff", 0.6, false, 0)}
            ${hatch}${legend}
          </svg>
        </div>
      </div>`;
    }).join("");
  </script>
</body>
</html>
